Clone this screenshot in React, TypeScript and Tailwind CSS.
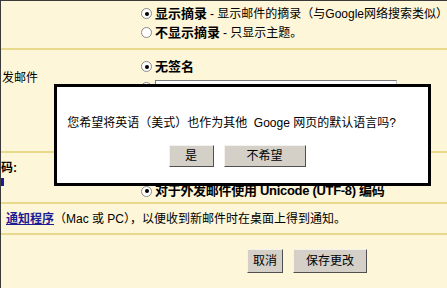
const font = "font-['Liberation_Sans','Noto_Sans_CJK_SC',sans-serif]";

function Radio({ checked }: { checked?: boolean }) {
  return (
    <span className="w-[11px] h-[11px] shrink-0 rounded-full border border-[#8a8a8a] bg-white flex items-center justify-center">
      {checked && <span className="w-[4px] h-[4px] rounded-full bg-black" />}
    </span>
  );
}

function WinButton({ label, className }: { label: string; className: string }) {
  return (
    <button
      className={`${className} bg-[#d4d0c8] border border-t-[#f4f2ee] border-l-[#f4f2ee] border-b-[#505050] border-r-[#505050] text-[12px] text-black flex items-center justify-center leading-none`}
    >
      {label}
    </button>
  );
}

export default function App() {
  return (
    <div className={`${font} relative w-[447px] h-[288px] overflow-hidden bg-[#fdf6d8] border-t border-l border-[#3a3a3a] text-black`}>
      {/* 摘录 */}
      <div className="flex h-[49px] border-b-2 border-[#e9d98a]">
        <div className="w-[140px] shrink-0" />
        <div className="flex flex-col pt-[3px] whitespace-nowrap">
          <div className="h-[19px] flex items-center gap-[3px]">
            <Radio checked />
            <span className="text-[13px] font-bold">显示摘录</span>
            <span className="text-[12px]"> - 显示邮件的摘录（与Google网络搜索类似）</span>
          </div>
          <div className="h-[19px] flex items-center gap-[3px]">
            <Radio />
            <span className="text-[13px] font-bold">不显示摘录</span>
            <span className="text-[12px]"> - 只显示主题。</span>
          </div>
        </div>
      </div>

      {/* 签名 */}
      <div className="flex h-[103px] border-b-2 border-[#e9d98a]">
        <div className="w-[140px] shrink-0 pt-[20px]">
          <div className="ml-[1px] text-[12px] leading-[16px] whitespace-nowrap">发邮件</div>
        </div>
        <div className="flex flex-col pt-[7px] whitespace-nowrap">
          <div className="h-[19px] flex items-center gap-[3px]">
            <Radio checked />
            <span className="text-[13px] font-bold">无签名</span>
          </div>
          <div className="mt-[4px] flex items-start gap-[3px]">
            <div className="pt-[2px]">
              <Radio />
            </div>
            <div className="w-[242px] h-[40px] border border-[#7b7b7b] border-r-[#c8c8c8] bg-white" />
          </div>
        </div>
      </div>

      {/* 编码 */}
      <div className="flex h-[51px] border-b-2 border-[#e9d98a]">
        <div className="w-[140px] shrink-0 pt-[7px]">
          <div className="text-[12px] font-bold leading-[16px] whitespace-nowrap">码:</div>
          <div className="w-[3px] h-[8px] mt-[2px] bg-[#1c1c94]" />
        </div>
        <div className="flex flex-col pt-[11px] whitespace-nowrap">
          <div className="h-[18px] flex items-center gap-[3px]">
            <Radio />
            <span className="text-[13px] font-bold">使用默认的文字编码</span>
          </div>
          <div className="h-[18px] flex items-center gap-[3px]">
            <Radio checked />
            <span className="text-[13px] font-bold tracking-[-0.3px]">对于外发邮件使用 Unicode (UTF-8) 编码</span>
          </div>
        </div>
      </div>

      {/* 通知 */}
      <div className="flex items-center h-[31px] pl-[5px] border-b-2 border-[#e9d98a] whitespace-nowrap">
        <a className="text-[12px] font-bold text-[#1c1c94] underline">通知程序</a>
        <span className="text-[12px]">（Mac 或 PC），以便收到新邮件时在桌面上得到通知。</span>
      </div>

      {/* 按钮 */}
      <div className="flex justify-end gap-[10px] pt-[14px] pr-[80px]">
        <WinButton label="取消" className="w-[36px] h-[24px]" />
        <WinButton label="保存更改" className="w-[74px] h-[24px]" />
      </div>

      {/* 语言提示对话框 */}
      <div className="absolute left-[53px] top-[83px] w-[377px] h-[102px] border-[3px] border-black bg-white flex flex-col items-center">
        <p className="pt-[28px] pr-[22px] text-[12px] leading-[16px] whitespace-pre">
          您希望将英语（美式）也作为其他  Googe 网页的默认语言吗?
        </p>
        <div className="mt-[14px] pr-[11px] flex gap-[10px]">
          <WinButton label="是" className="w-[45px] h-[22px]" />
          <WinButton label="不希望" className="w-[82px] h-[22px]" />
        </div>
      </div>
    </div>
  );
}
